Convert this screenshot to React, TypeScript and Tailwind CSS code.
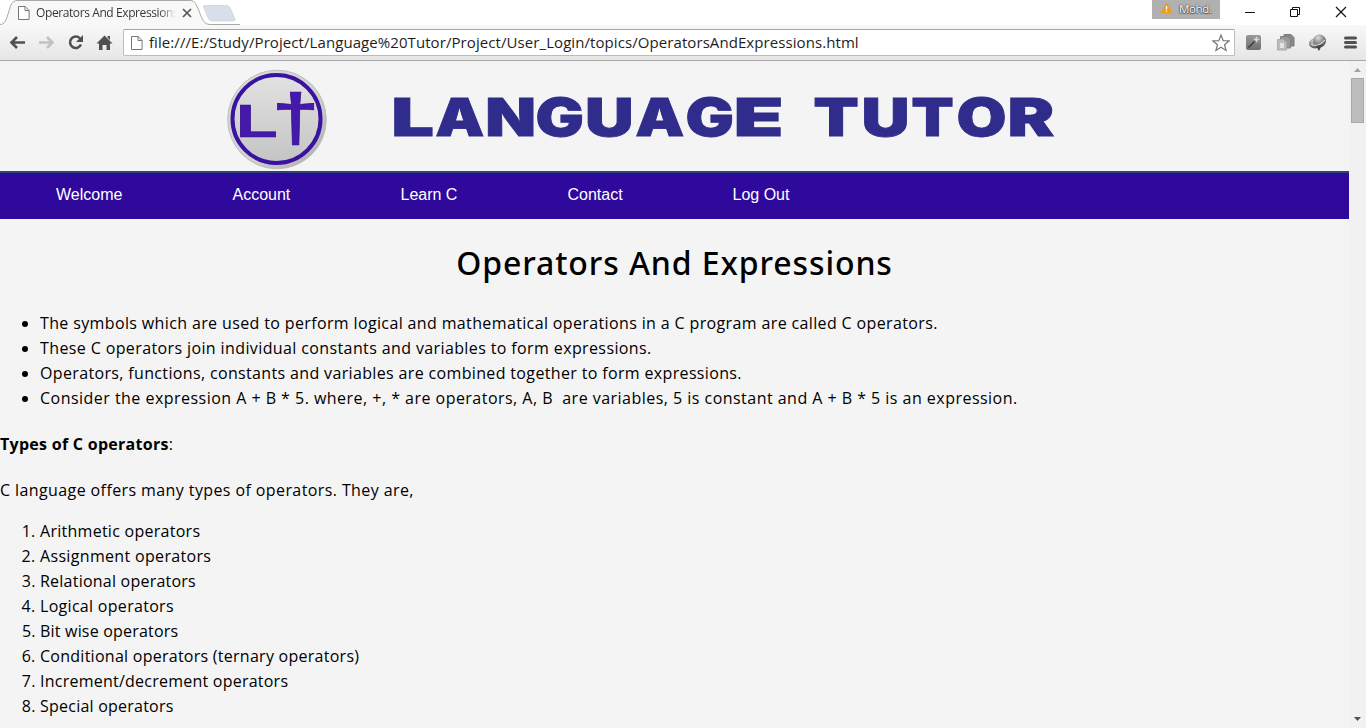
import type { ReactNode } from "react";

const bullets: [string, string][] = [
  ["The symbols which are used to perform logical and mathematical operations in a C program are called C operators.", "tracking-[0.366px]"],
  ["These C operators join individual constants and variables to form expressions.", "tracking-[0.385px]"],
  ["Operators, functions, constants and variables are combined together to form expressions.", "tracking-[0.35px]"],
  ["Consider the expression A + B * 5. where, +, * are operators, A, B\u00a0 are variables, 5 is constant and A + B * 5 is an expression.", "tracking-[0.473px]"],
];

const operatorTypes: [string, string][] = [
  ["Arithmetic operators", "tracking-[0.27px]"],
  ["Assignment operators", "tracking-[0.33px]"],
  ["Relational operators", "tracking-[0.23px]"],
  ["Logical operators", "tracking-[0.3px]"],
  ["Bit wise operators", "tracking-[0.2px]"],
  ["Conditional operators (ternary operators)", "tracking-[0.263px]"],
  ["Increment/decrement operators", "tracking-[0.236px]"],
  ["Special operators", "tracking-[0.23px]"],
];

const navItems: [string, string][] = [
  ["Welcome", "w-[176.5px]"],
  ["Account", "w-[168px]"],
  ["Learn C", "w-[167px]"],
  ["Contact", "w-[165px]"],
  ["Log Out", "w-[165px]"],
];

/* letter, left edge, width, ink start and ink width at 52px */
const wordmark: [string, number, number, number, number][] = [
  ["L", 395, 37, 2.6, 25.4],
  ["A", 436, 48, 0.6, 40.4],
  ["N", 488.5, 44.5, 2.6, 35],
  ["G", 537.5, 44.5, 1.6, 36],
  ["U", 588, 43.5, 2.4, 33.6],
  ["A", 636, 48, 0.6, 40.4],
  ["G", 687.5, 44.5, 1.6, 36],
  ["E", 737.5, 42.5, 2.6, 27],
  ["T", 814.5, 43.5, 1, 34],
  ["U", 864.5, 43, 2.4, 33.6],
  ["T", 912.5, 40.5, 1, 34],
  ["O", 958.5, 46.5, 1.6, 37.4],
  ["R", 1011, 44.5, 2.6, 33],
];

function PageIcon() {
  return (
    <svg width="12" height="14" viewBox="0 0 12 14" fill="#fff" stroke="#777" className="shrink-0">
      <path d="M.5.5h6.6l4 4v9H.5z" />
      <path d="M7 .5v4h4" fill="none" />
    </svg>
  );
}

function TabStrip() {
  return (
    <div className="flex h-[25px] justify-between bg-white">
      <div className="relative h-[25px] w-[240px]">
        <svg width="240" height="25" className="absolute inset-0">
          <path d="M0 24.5C5 24.5 6 20 8 14C11 5 11 .5 18 .5H190C195 .5 196 4 199 11C202 19 204 24.5 210 24.5V25H0Z" fill="#f8f8f8" />
          <path d="M0 24.5C5 24.5 6 20 8 14C11 5 11 .5 18 .5H190C195 .5 196 4 199 11C202 19 204 24.5 210 24.5H240" fill="none" stroke="#a9a9a9" />
          <path d="M205 5.5H226C229 5.5 230 7 231.500 11L234.500 18C235.500 20.500 234.500 21 232 21H214C210 21 209 20 207.500 16.500L204 8C203 6 203.500 5.500 205 5.500Z" fill="#d9dfe8" stroke="#c9ced7" strokeWidth=".7" />
        </svg>
        <div className="relative flex h-[25px] items-center pl-[18px]">
          <PageIcon />
          <span className="ml-[6px] w-[140px] overflow-hidden bg-gradient-to-r from-[#333] from-88% to-transparent bg-clip-text font-['Open_Sans',sans-serif] text-[12px] tracking-[-0.4px] whitespace-nowrap text-transparent">
            Operators And Expressions
          </span>
          <svg width="10" height="10" viewBox="0 0 10 10" className="ml-[6px]">
            <path d="M1 1l8 8M9 1L1 9" stroke="#555" strokeWidth="1.7" />
          </svg>
        </div>
      </div>
      <div className="flex">
        <div className="flex h-[19px] w-[68px] bg-[#b0b0b0] pl-[8px]">
          <svg width="13" height="12" viewBox="0 0 13 12" className="mt-[2px]">
            <path d="M6.500 .5L12.300 11H.7Z" fill="#f29a12" />
            <path d="M6.500 4v3.500M6.500 8.500v1.200" stroke="#fff" strokeWidth="1.300" />
          </svg>
          <span className="ml-[6px] font-['Open_Sans',sans-serif] text-[11.500px] leading-[18px] tracking-[-0.35px] text-white [text-shadow:0_0_1px_#333,0_0_2px_#444,0_1px_1px_#555]">Mohd.</span>
        </div>
        <svg width="146" height="25" viewBox="1220 0 146 25" fill="none" stroke="#111">
          <path d="M1245 12.500h10M1290.500 9.500h7v7h-7zM1292.500 9.500v-2h7v7h-2" />
          <path d="M1336 7l10 10M1346 7l-10 10" strokeWidth="1.200" />
        </svg>
      </div>
    </div>
  );
}

function Toolbar() {
  return (
    <div className="flex h-[36px] border-b border-[#a7a7a7] bg-gradient-to-b from-[#f8f8f8] to-[#e6e6e6]">
      <svg width="123" height="35" viewBox="0 25 123 35" fill="none" className="shrink-0">
        <path d="M25 42.500H12M17 37l-5.500 5.500L17 48" stroke="#505050" strokeWidth="2.600" />
        <path d="M39 42.500H52M47 37l5.500 5.500L47 48" stroke="#c2c2c2" strokeWidth="2.600" />
        <path d="M80 38.500A5.700 5.700 0 1 0 81 44.500" stroke="#505050" strokeWidth="2.500" />
        <path d="M83 35v7h-7z" fill="#505050" />
        <path d="M104.500 35.500L112.500 43.500H110V50H106.500V45H102.500V50H99V43.500H96.500ZM107.500 36h2.500v4l-2.500-2.500z" fill="#505050" />
      </svg>
      <div className="mt-[4px] flex h-[27px] w-[1112px] items-center rounded-[2px] border border-[#bcbcbc] border-t-[#a5a5a5] bg-white pl-[7px]">
        <PageIcon />
        <span className="ml-[6px] flex-1 pb-[2px] font-['Open_Sans',sans-serif] text-[15px] leading-[20px] tracking-[0.077px] whitespace-nowrap text-[#1e1e1e]">
          file:///E:/Study/Project/Language%20Tutor/Project/User_Login/topics/OperatorsAndExpressions.html
        </span>
        <svg width="18" height="18" viewBox="0 0 18 18" className="mr-[4px]">
          <path d="M9 1l2.200 5.600 5.900.3-4.600 3.800 1.600 5.800L9 13.200l-5.100 3.300 1.600-5.800L.9 6.900l5.900-.3z" fill="#fff" stroke="#777" strokeWidth="1.200" />
        </svg>
      </div>
      <svg width="131" height="35" viewBox="1235 25 131 35" className="shrink-0">
        <defs>
          <linearGradient id="tile" x2="0" y2="1"><stop stopColor="#999" /><stop offset="1" stopColor="#6f6f6f" /></linearGradient>
          <radialGradient id="ball" cx=".4" cy=".25" r=".8"><stop stopColor="#ddd" /><stop offset=".55" stopColor="#888" /><stop offset="1" stopColor="#444" /></radialGradient>
        </defs>
        <rect x="1246" y="35" width="15" height="15" rx="2" fill="url(#tile)" />
        <path d="M1248.500 47.500l6.500-6.500" stroke="#333" strokeWidth="1.300" />
        <path d="M1256.500 36.500v6M1253.500 39.500h6M1254.500 37.500l4 4M1258.500 37.500l-4 4" stroke="#ddd" strokeWidth=".9" />
        <path d="M1284 34.500h7l3 3v8.500h-10z" fill="#888" stroke="#7c7c7c" />
        <path d="M1280.500 36.500h7l3 3v8.500h-10z" fill="#999" stroke="#808080" />
        <path d="M1277.500 39.500h6l3 3v7.500h-9z" fill="#bbb" stroke="#aaa" />
        <rect x="1280" y="43" width="4" height="5" fill="#e4e4e4" />
        <ellipse cx="1315" cy="43.500" rx="6" ry="5" fill="url(#ball)" />
        <circle cx="1319.500" cy="41" r="6.500" fill="url(#ball)" />
        <path d="M1311 44c4 3 9 1 14-4" stroke="#ccc" strokeWidth="1.200" fill="none" />
        <path d="M1316 46l6-1-3 6z" fill="#444" />
        <path d="M1345.500 38h10M1345.500 42.500h10M1345.500 47h10" stroke="#505050" strokeWidth="3" strokeLinecap="round" />
      </svg>
    </div>
  );
}

function Banner() {
  return (
    <svg width="1349" height="110" viewBox="0 61 1349 110" className="block">
      <defs>
        <linearGradient id="rim" x2="1" y2="1"><stop stopColor="#dcdcdc" /><stop offset=".6" stopColor="#cfcfcf" /><stop offset="1" stopColor="#a8a8a8" /></linearGradient>
        <linearGradient id="face" x2="0" y2="1"><stop stopColor="#e2e2e2" /><stop offset="1" stopColor="#c4c4c4" /></linearGradient>
      </defs>
      <circle cx="277" cy="119.500" r="49.300" fill="url(#rim)" stroke="#bdbdbd" />
      <circle cx="276.500" cy="119" r="44" fill="url(#face)" stroke="#3a12a0" strokeWidth="4" />
      <g fill="#4519ac" stroke="#35108c" strokeWidth=".6" fontFamily="Liberation Sans" fontWeight="700">
        <text transform="translate(236 137) scale(1.480 1)" fontSize="46">L</text>
        <text transform="translate(295.500 140) scale(1.300 1)" fontSize="66" textAnchor="middle">†</text>
      </g>
      <g fill="#302c8b" stroke="#302c8b" strokeWidth=".8" fontFamily="Inter" fontWeight="900" fontSize="52">
        {wordmark.map(([ch, left, width, ink, inkWidth], i) => {
          const s = width / inkWidth;
          return (
            <text key={i} transform={`translate(${left - ink * s} 136) scale(${s} 1)`}>
              {ch}
            </text>
          );
        })}
      </g>
    </svg>
  );
}

function Paragraph({ children, className }: { children: ReactNode; className: string }) {
  return <p className={`leading-[25px] whitespace-nowrap ${className}`}>{children}</p>;
}

function Scrollbar() {
  return (
    <div className="flex w-[17px] flex-col items-center bg-[#f1f1f1]">
      <svg width="17" height="17"><path d="M5 11h7L8.500 7z" fill="#a3a3a3" /></svg>
      <div className="h-[45px] w-[13px] border border-[#a8a8a8] bg-[#bcbcbc]" />
      <div className="flex-1" />
      <svg width="17" height="17"><path d="M5 6h7l-3.500 4z" fill="#505050" /></svg>
    </div>
  );
}

export default function App() {
  return (
    <div className="flex h-[728px] w-[1366px] flex-col overflow-hidden bg-white">
      <TabStrip />
      <Toolbar />
      <div className="flex min-h-0 flex-1">
        <main className="w-[1349px] overflow-hidden bg-[#f4f4f4] font-['Open_Sans',sans-serif] text-[16px] text-black">
          <Banner />
          <nav className="flex h-[48px] border-t-2 border-[#2a4478] bg-[#2f099b] pl-[56px] font-['Liberation_Sans',Arial,sans-serif] text-[16px] leading-[44px] text-white">
            {navItems.map(([label, width]) => (
              <a key={label} className={width}>{label}</a>
            ))}
          </nav>
          <h1 className="mt-[19px] h-[51px] text-center font-['Noto_Sans',sans-serif] text-[32px] leading-[50px] font-medium tracking-[0.9px]">
            Operators And Expressions
          </h1>
          <ul className="mt-[22px] list-disc pl-[40px]">
            {bullets.map(([text, tracking]) => (
              <li key={text} className={`leading-[25px] whitespace-nowrap ${tracking}`}>{text}</li>
            ))}
          </ul>
          <Paragraph className="mt-[21px] tracking-[0.28px]">
            <b className="font-bold">Types of C operators</b>:
          </Paragraph>
          <Paragraph className="mt-[21px] tracking-[0.4px]">C language offers many types of operators. They are,</Paragraph>
          <ol className="mt-[16px] list-decimal pl-[40px]">
            {operatorTypes.map(([text, tracking]) => (
              <li key={text} className={`leading-[25px] whitespace-nowrap ${tracking}`}>{text}</li>
            ))}
          </ol>
        </main>
        <Scrollbar />
      </div>
    </div>
  );
}
